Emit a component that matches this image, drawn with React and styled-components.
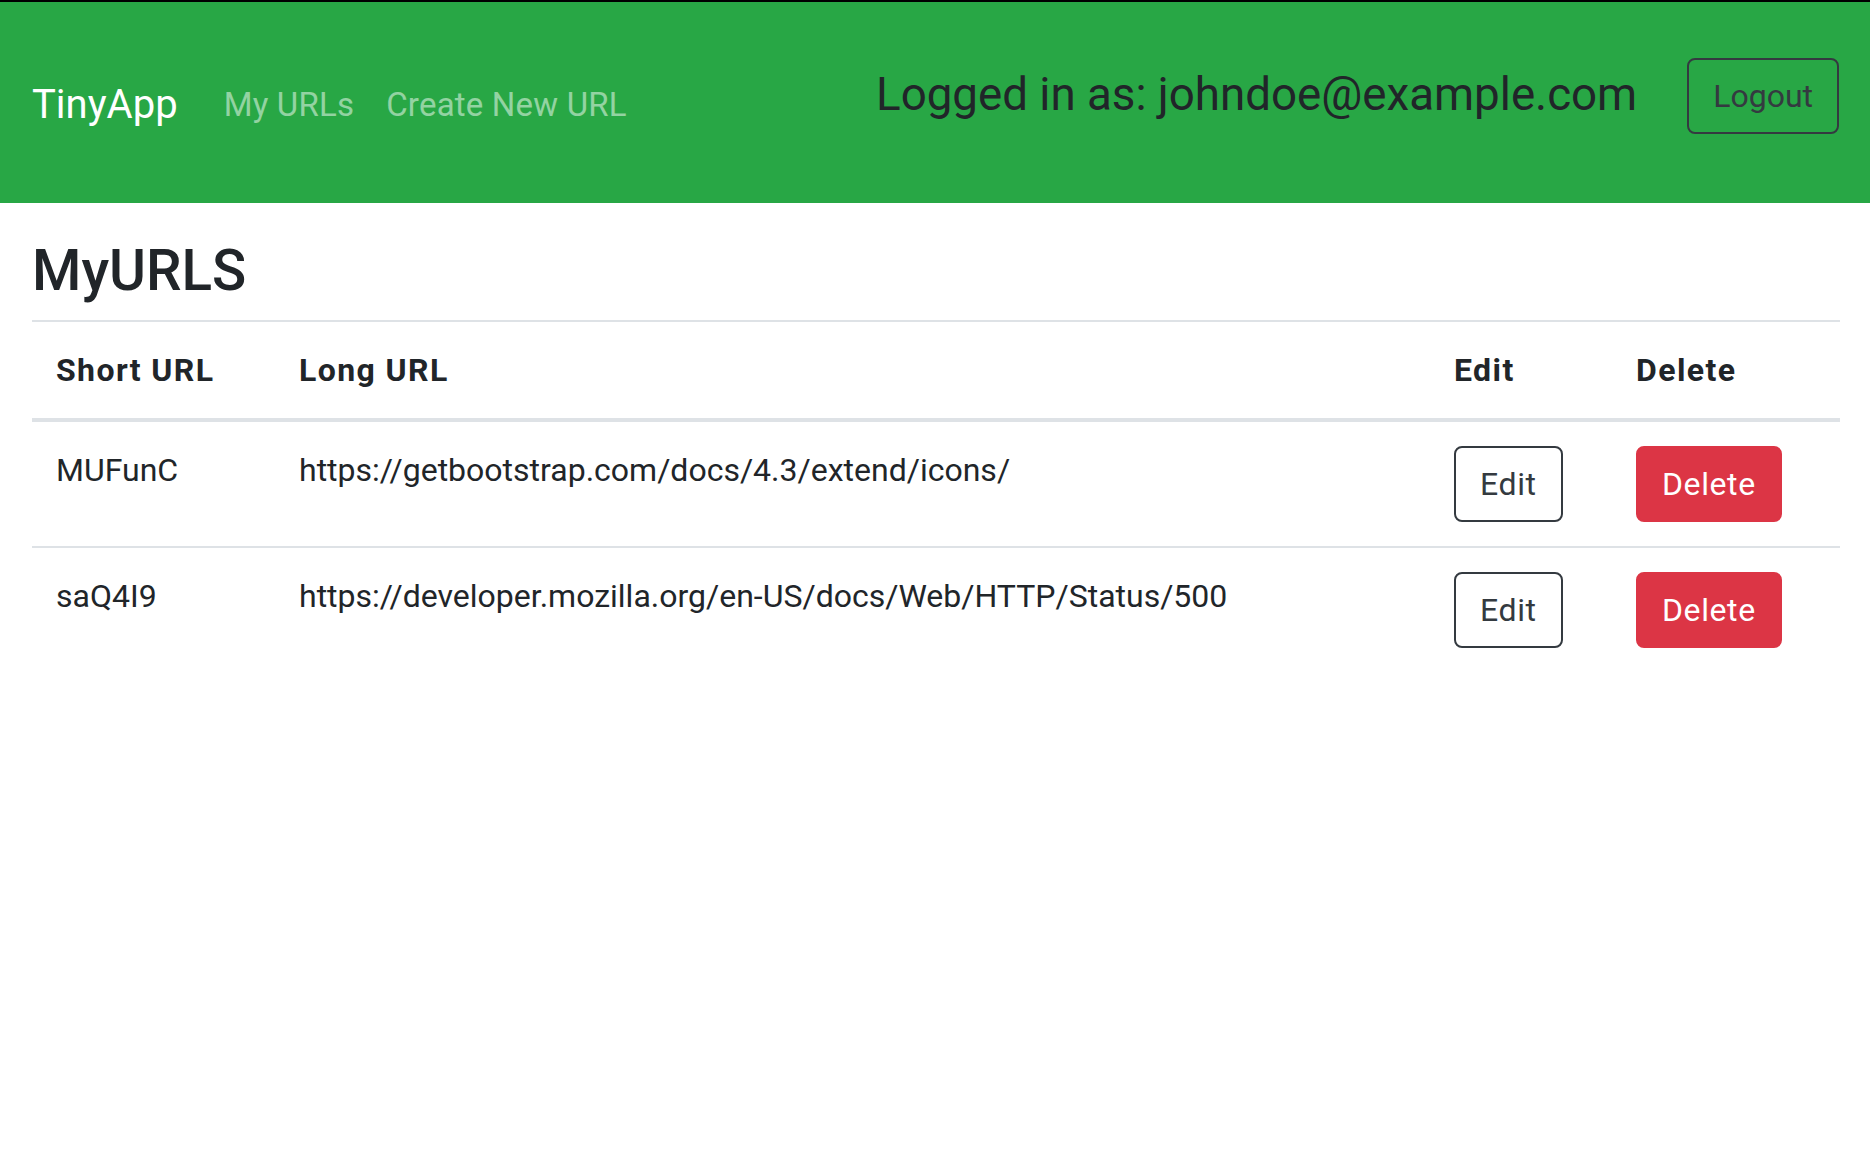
import React from "react";
import styled, { createGlobalStyle } from "styled-components";

const Global = createGlobalStyle`
  html, body { margin: 0; padding: 0; background: #fff; }
  body {
    font-family: Roboto, "Noto Sans", "DejaVu Sans", sans-serif;
    color: #212529;
    font-size: 32px;
    line-height: 1.5;
  }
  * { box-sizing: border-box; }
`;

const Navbar = styled.nav`
  display: flex;
  align-items: center;
  height: 203px;
  padding: 0 31px 0 32px;
  background: #28a745;
  border-top: 2px solid #000;
`;

const Brand = styled.a`
  font-size: 40px;
  line-height: 1.5;
  color: #fff;
  text-decoration: none;
  margin-right: 30px;
  margin-top: 4px;
`;

const NavLinks = styled.div`
  display: flex;
  align-items: center;
  margin-top: 4px;
`;

const NavLink = styled.a`
  font-size: 33px;
  letter-spacing: 0.2px;
  line-height: 1.5;
  padding: 0 16px;
  color: rgba(255, 255, 255, 0.5);
  text-decoration: none;
`;

const UserBox = styled.div`
  margin-left: auto;
  display: flex;
  align-items: center;
  gap: 50px;
  margin-bottom: 14px;
`;

const LoggedIn = styled.h4`
  margin: 0;
  font-size: 45.7px;
  font-weight: 400;
  line-height: 1.2;
  color: #212529;
`;

const Button = styled.button`
  font-family: inherit;
  font-size: 32px;
  letter-spacing: ${(p) => (p.$tight ? "0" : "0.6px")};
  line-height: 1.5;
  padding: 12px 24px;
  border-radius: 8px;
  border: 2px solid ${(p) => (p.$variant === "danger" ? "#dc3545" : "#343a40")};
  background: ${(p) => (p.$variant === "danger" ? "#dc3545" : "transparent")};
  color: ${(p) => (p.$variant === "danger" ? "#fff" : "#343a40")};
  cursor: pointer;
`;

const Main = styled.main`
  padding: 35px 30px 0 32px;
`;

const Title = styled.h2`
  margin: 0 0 14px;
  font-size: 56.5px;
  font-weight: 500;
  line-height: 1.2;
  color: #212529;
`;

const Table = styled.table`
  width: 100%;
  border-collapse: collapse;
  table-layout: fixed;
`;

const Th = styled.th`
  width: ${(p) => p.$w}px;
  text-align: left;
  font-weight: 700;
  letter-spacing: 1.4px;
  padding: 24px;
  border-top: 2px solid #dee2e6;
  border-bottom: 4px solid #dee2e6;
  vertical-align: bottom;
  line-height: 1.5;
`;

const Td = styled.td`
  padding: 24px;
  vertical-align: top;
  border-top: ${(p) => (p.$first ? "none" : "2px solid #dee2e6")};
  line-height: 1.5;
  white-space: nowrap;
`;

const urls = [
  { id: "MUFunC", long: "https://getbootstrap.com/docs/4.3/extend/icons/" },
  { id: "saQ4I9", long: "https://developer.mozilla.org/en-US/docs/Web/HTTP/Status/500" },
];

export default function App() {
  return (
    <>
      <Global />
      <Navbar>
        <Brand href="#">TinyApp</Brand>
        <NavLinks>
          <NavLink href="#">My URLs</NavLink>
          <NavLink href="#">Create New URL</NavLink>
        </NavLinks>
        <UserBox>
          <LoggedIn>Logged in as: johndoe@example.com</LoggedIn>
          <Button $tight>Logout</Button>
        </UserBox>
      </Navbar>
      <Main>
        <Title>MyURLS</Title>
        <Table>
          <thead>
            <tr>
              <Th $w={243}>Short URL</Th>
              <Th $w={1155}>Long URL</Th>
              <Th $w={182}>Edit</Th>
              <Th $w={228}>Delete</Th>
            </tr>
          </thead>
          <tbody>
            {urls.map((u, i) => (
              <tr key={u.id}>
                <Td $first={i === 0}>{u.id}</Td>
                <Td $first={i === 0}>{u.long}</Td>
                <Td $first={i === 0}>
                  <Button>Edit</Button>
                </Td>
                <Td $first={i === 0}>
                  <Button $variant="danger">Delete</Button>
                </Td>
              </tr>
            ))}
          </tbody>
        </Table>
      </Main>
    </>
  );
}
